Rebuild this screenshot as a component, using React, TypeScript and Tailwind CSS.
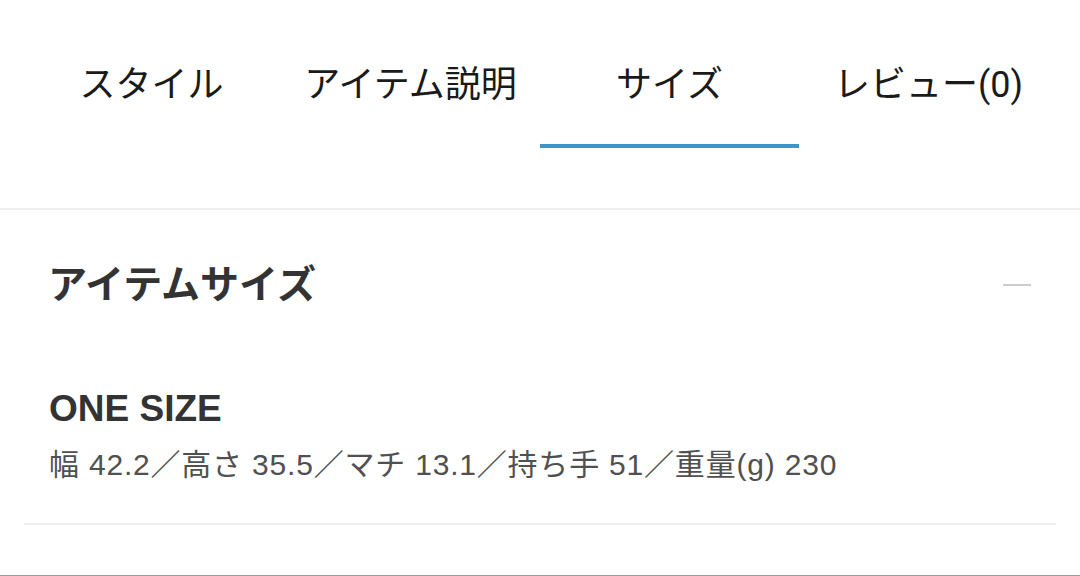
import React, { useState } from 'react';

const tabs = ['スタイル', 'アイテム説明', 'サイズ', 'レビュー(0)'];

const ItemSize: React.FC = () => {
  const [open, setOpen] = useState(true);

  return (
    <div>
      <div className="flex items-center justify-between pl-[48px] pr-[49px] pt-[52px]">
        <h2 className="text-[39px] leading-[46px] font-bold text-[#333333]">アイテムサイズ</h2>
        <button
          onClick={() => setOpen(!open)}
          className="flex h-[28px] w-[28px] items-center justify-center"
          aria-label="閉じる"
        >
          <span className="block h-[2px] w-[28px] bg-[#cccccc]" />
        </button>
      </div>

      {open && (
        <div
          className="px-[49px] pt-[79px]"
          style={{ fontFamily: '"Liberation Sans", "Noto Sans CJK JP", sans-serif' }}
        >
          <div className="text-[37px] leading-[44px] font-bold text-[#333333]">ONE SIZE</div>
          <div className="mt-[16px] text-[30px] leading-[36px] tracking-[0.8px] text-[#505050]">
            幅 42.2／高さ 35.5／マチ 13.1／持ち手 51／重量(g) 230
          </div>
        </div>
      )}

      <div className="mx-6 mt-[40px] h-[2px] bg-[#f0f0f0]" />
    </div>
  );
};

export default function App() {
  const [active, setActive] = useState(2);

  return (
    <div
      className="h-[576px] w-[1080px] overflow-hidden bg-white"
      style={{ fontFamily: 'Roboto, "Noto Sans CJK JP", sans-serif' }}
    >
      <div className="grid grid-cols-4 px-[22px]">
        {tabs.map((tab, i) => (
          <button
            key={tab}
            onClick={() => setActive(i)}
            className="flex h-[148px] flex-col items-center"
          >
            <span className="pt-[67px] text-[36px] leading-[36px] text-[#1a1a1a]">{tab}</span>
            <span className="flex-1" />
            <span
              className={
                i === active ? 'block h-[4px] w-full bg-[#3b96c9]' : 'block h-[4px] w-full bg-transparent'
              }
            />
          </button>
        ))}
      </div>

      <div className="h-[60px]" />
      <div className="h-[2px] bg-[#eeeeee]" />

      <ItemSize />

      <div className="h-[50px]" />
      <div className="h-px bg-[#9a9a9a]" />
    </div>
  );
}
